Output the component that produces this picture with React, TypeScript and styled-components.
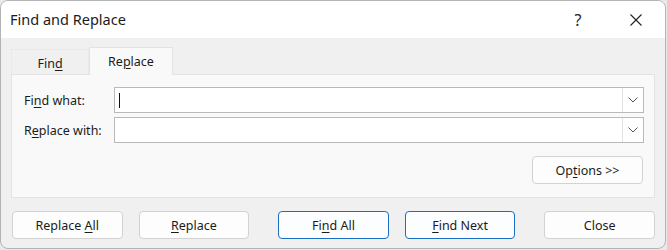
import React from "react";
import styled, { createGlobalStyle } from "styled-components";

const Global = createGlobalStyle`
  html, body { margin: 0; padding: 0; background: #e9e9e9; }
  body { font-family: "Noto Sans", "Open Sans", sans-serif; color: #1b1b1b; }
  * { box-sizing: border-box; }
`;

const Dialog = styled.div`
  width: 666px;
  height: 249px;
  border: 1px solid #b4b4b4;
  border-radius: 8px;
  overflow: hidden;
  background: #f0f0f0;
  display: flex;
  flex-direction: column;
`;

const TitleBar = styled.div`
  height: 37px;
  background: #ffffff;
  display: flex;
  align-items: center;
  padding-left: 9px;
  flex-shrink: 0;
`;

const Title = styled.div`
  font-size: 14.5px;
  flex: 1;
  margin-top: -1px;
`;

const TitleButton = styled.div`
  width: 58px;
  height: 37px;
  display: flex;
  align-items: center;
  justify-content: center;
  font-size: 16px;
  color: #222;
`;

const Body = styled.div`
  padding: 9px 10px 0 10px;
  display: flex;
  flex-direction: column;
`;

const TabRow = styled.div`
  height: 27px;
  display: flex;
  align-items: flex-end;
`;

const Tab = styled.div<{ $active?: boolean }>`
  height: ${(p) => (p.$active ? 28 : 25)}px;
  width: ${(p) => (p.$active ? 84 : 78)}px;
  display: flex;
  align-items: center;
  justify-content: center;
  font-size: 12.5px;
  background: ${(p) => (p.$active ? "#f9f9f9" : "#f0f0f0")};
  border: 1px solid ${(p) => (p.$active ? "#e3e3e3" : "#e9e9e9")};
  border-bottom: none;
  margin-bottom: ${(p) => (p.$active ? -1 : 0)}px;
  position: relative;
  z-index: ${(p) => (p.$active ? 1 : 0)};
  padding-top: ${(p) => (p.$active ? 0 : 2)}px;
`;

const Panel = styled.div`
  height: 124px;
  background: #f9f9f9;
  border: 1px solid #e3e3e3;
  padding: 12px 10px 0 12px;
  display: flex;
  flex-direction: column;
`;

const FieldRow = styled.div`
  display: grid;
  grid-template-columns: 90px 1fr;
  align-items: center;
  margin-bottom: 4px;
`;

const Label = styled.label`
  font-size: 12.5px;
`;

const Combo = styled.div`
  height: 26px;
  border: 1px solid #b9b9b9;
  background: #ffffff;
  display: flex;
  align-items: stretch;
`;

const ComboInput = styled.div`
  flex: 1;
  position: relative;
`;

const Caret = styled.span`
  position: absolute;
  left: 4px;
  top: 5px;
  width: 1px;
  height: 15px;
  background: #111;
`;

const DropButton = styled.div`
  width: 21px;
  border-left: 1px solid #e2e2e2;
  display: flex;
  align-items: center;
  justify-content: center;
`;

const OptionsRow = styled.div`
  display: flex;
  justify-content: flex-end;
  margin-top: 9px;
  padding-right: 1px;
`;

const Button = styled.div<{ $primary?: boolean; $gap?: number }>`
  width: 111px;
  height: 28px;
  margin-left: ${(p) => p.$gap ?? 0}px;
  border: 1px solid ${(p) => (p.$primary ? "#1a6fc4" : "#d2d2d2")};
  border-radius: 4px;
  background: ${(p) => (p.$primary ? "#fbfdff" : "#fdfdfd")};
  display: flex;
  align-items: center;
  justify-content: center;
  font-size: 12.5px;
  color: #1b1b1b;
`;

const ButtonRow = styled.div`
  display: flex;
  margin-top: 13px;
`;

const U = styled.span`
  text-decoration: underline;
  text-underline-offset: 2px;
`;

const Chevron = () => (
  <svg width="10" height="6" viewBox="0 0 10 6">
    <path d="M0.5 0.5 L5 5 L9.5 0.5" fill="none" stroke="#555" strokeWidth="1" />
  </svg>
);

const CloseIcon = () => (
  <svg width="12" height="12" viewBox="0 0 12 12">
    <path d="M0.5 0.5 L11.5 11.5 M11.5 0.5 L0.5 11.5" stroke="#222" strokeWidth="1.1" />
  </svg>
);

export default function App() {
  return (
    <>
      <Global />
      <Dialog>
        <TitleBar>
          <Title>Find and Replace</Title>
          <TitleButton>?</TitleButton>
          <TitleButton>
            <CloseIcon />
          </TitleButton>
        </TitleBar>
        <Body>
          <TabRow>
            <Tab>
              <span>
                Fin<U>d</U>
              </span>
            </Tab>
            <Tab $active>
              <span>
                Re<U>p</U>lace
              </span>
            </Tab>
          </TabRow>
          <Panel>
            <FieldRow>
              <Label>
                Fi<U>n</U>d what:
              </Label>
              <Combo>
                <ComboInput>
                  <Caret />
                </ComboInput>
                <DropButton>
                  <Chevron />
                </DropButton>
              </Combo>
            </FieldRow>
            <FieldRow>
              <Label>
                R<U>e</U>place with:
              </Label>
              <Combo>
                <ComboInput />
                <DropButton>
                  <Chevron />
                </DropButton>
              </Combo>
            </FieldRow>
            <OptionsRow>
              <Button>
                <span>
                  Op<U>t</U>ions &gt;&gt;
                </span>
              </Button>
            </OptionsRow>
          </Panel>
          <ButtonRow>
            <Button $gap={1}>
              <span>
                Replace <U>A</U>ll
              </span>
            </Button>
            <Button $gap={16}>
              <span>
                <U>R</U>eplace
              </span>
            </Button>
            <Button $primary $gap={29}>
              <span>
                Fi<U>n</U>d All
              </span>
            </Button>
            <Button $primary $gap={16}>
              <span>
                <U>F</U>ind Next
              </span>
            </Button>
            <Button $gap={29}>
              <span>Close</span>
            </Button>
          </ButtonRow>
        </Body>
      </Dialog>
    </>
  );
}
